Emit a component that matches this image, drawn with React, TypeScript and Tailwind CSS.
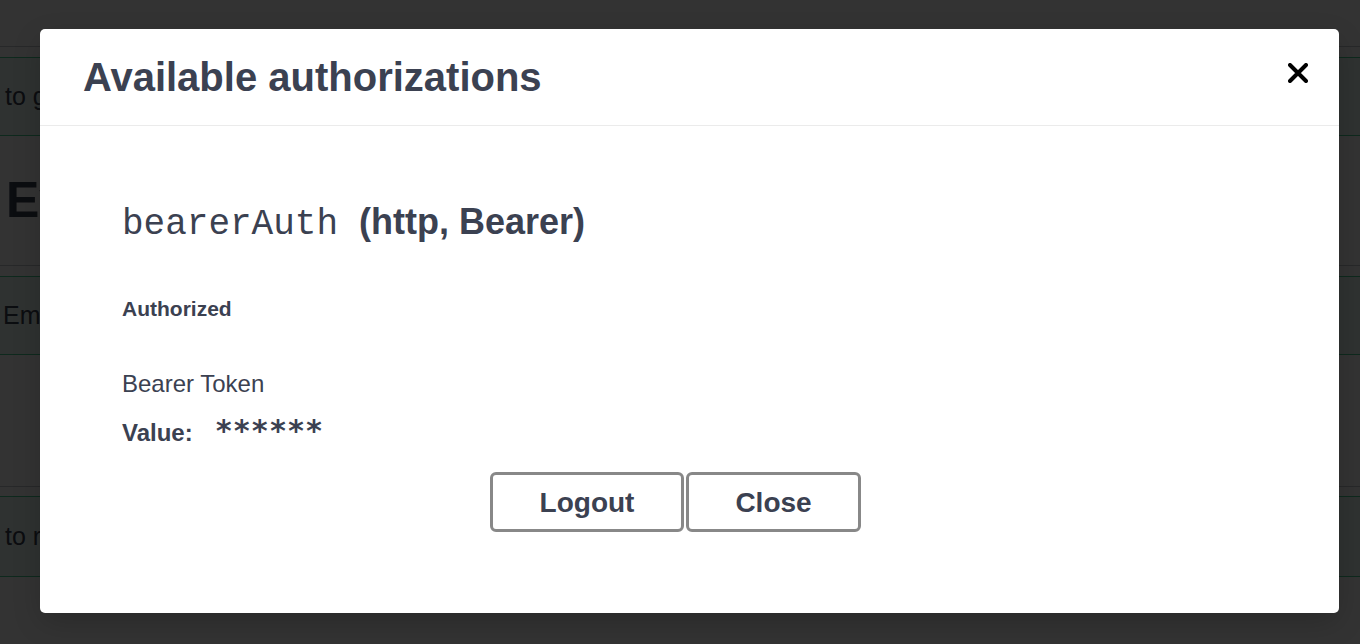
import React from "react";

const sans = { fontFamily: '"Liberation Sans", Arial, sans-serif' } as const;
const mono = { fontFamily: '"Liberation Mono", "DejaVu Sans Mono", monospace' } as const;

export default function App() {
  return (
    <div
      className="relative h-[644px] w-[1360px] overflow-hidden bg-white text-[#3b4151]"
      style={sans}
    >
      {/* page behind the modal */}
      <div className="h-[47px] border-b border-[rgba(59,65,81,0.3)]" />
      <div className="mt-[10px] flex h-[79px] items-center border-y border-[#49cc90] bg-[rgba(73,204,144,0.1)] pl-[5px] text-[25px]">
        to get all events
      </div>
      <div className="flex h-[130px] items-center border-b border-[rgba(59,65,81,0.3)] pl-[6px] text-[50px] font-bold">
        Events
      </div>
      <div className="mt-[10px] flex h-[79px] items-center border-y border-[#49cc90] bg-[rgba(73,204,144,0.1)] pl-[3px] text-[25px]">
        Emits a new event
      </div>
      <div className="h-[132px] border-b border-[rgba(59,65,81,0.3)]" />
      <div className="mt-[9px] flex h-[81px] items-center border-y border-[#49cc90] bg-[rgba(73,204,144,0.1)] pl-[5px] text-[25px]">
        to remove an event
      </div>

      {/* overlay */}
      <div className="absolute inset-0 bg-black/80" />

      {/* modal */}
      <div className="absolute left-[40px] top-[29px] flex h-[584px] w-[1299px] flex-col rounded-[5px] bg-white shadow-[0_10px_30px_-2px_rgba(0,0,0,0.2)]">
        <div className="flex h-[97px] items-center justify-between border-b border-[#ebebeb] pl-[43px] pr-[31px]">
          <h3 className="text-[40px] font-bold leading-none text-[#3b4151]">
            Available authorizations
          </h3>
          <svg width="20" height="20" viewBox="0 0 20 20" className="-mt-[8px]">
            <path d="M2 2 L18 18 M18 2 L2 18" stroke="#000" strokeWidth="4" strokeLinecap="round" />
          </svg>
        </div>

        <div className="flex flex-1 flex-col pl-[82px] pr-[110px] pt-[74px]">
          <h4 className="flex items-baseline text-[36px] leading-[43px]">
            <span className="font-normal text-[#3b4151]" style={mono}>
              bearerAuth
            </span>
            <span className="ml-[21px] font-bold">(http, Bearer)</span>
          </h4>
          <div className="mt-[51px] text-[21px] font-bold leading-[24px]">Authorized</div>
          <div className="mt-[50px] text-[24px] leading-[26px]">Bearer Token</div>
          <div className="mt-[21px] flex items-baseline leading-[26px]">
            <span className="text-[24px] font-bold">Value:</span>
            <span
              className="ml-[22px] text-[30px] font-bold"
              style={{ fontFamily: '"DejaVu Sans Mono", "Liberation Mono", monospace' }}
            >
              ******
            </span>
          </div>
          <div className="mt-[26px] flex justify-center gap-[2px]">
            <button className="flex h-[60px] w-[194px] items-center justify-center rounded-[6px] border-[3px] border-[#888888] bg-white pt-[2px] text-[28px] font-bold text-[#3b4151]">
              Logout
            </button>
            <button className="flex h-[60px] w-[175px] items-center justify-center rounded-[6px] border-[3px] border-[#888888] bg-white pt-[2px] text-[28px] font-bold text-[#3b4151]">
              Close
            </button>
          </div>
        </div>
      </div>
    </div>
  );
}
